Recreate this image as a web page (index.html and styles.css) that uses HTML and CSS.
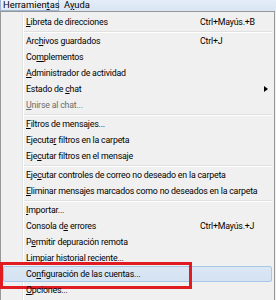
FILE: index.html
```html
<!DOCTYPE html>
<html>
<head>
<meta charset="utf-8">
<link rel="stylesheet" href="styles.css">
</head>
<body>
<div class="menubar">
  <div class="mb-item active">Herramien<u>t</u>as</div>
  <div class="mb-item">A<u>y</u>uda</div>
</div>
<div class="menu">
  <div class="item"><span class="label"><u>L</u>ibreta de direcciones</span><span class="key">Ctrl+Mayús.+B</span></div>
  <div class="sep"></div>
  <div class="item"><span class="label">Arc<u>h</u>ivos guardados</span><span class="key">Ctrl+J</span></div>
  <div class="item"><span class="label">Co<u>m</u>plementos</span></div>
  <div class="item"><span class="label"><u>A</u>dministrador de actividad</span></div>
  <div class="item"><span class="label">Estado de <u>c</u>hat</span><span class="arrow"></span></div>
  <div class="item disabled"><span class="label"><u>U</u>nirse al chat...</span></div>
  <div class="sep"></div>
  <div class="item"><span class="label"><u>F</u>iltros de mensajes...</span></div>
  <div class="item"><span class="label">Ejecuta<u>r</u> filtros en la carpeta</span></div>
  <div class="item"><span class="label">Eje<u>c</u>utar filtros en el mensaje</span></div>
  <div class="sep"></div>
  <div class="item"><span class="label">Eje<u>c</u>utar controles de correo no deseado en la carpeta</span></div>
  <div class="item"><span class="label"><u>E</u>liminar mensajes marcados como no deseados en la carpeta</span></div>
  <div class="sep"></div>
  <div class="item"><span class="label"><u>I</u>mportar...</span></div>
  <div class="item"><span class="label">Consola d<u>e</u> errores</span><span class="key">Ctrl+Mayús.+J</span></div>
  <div class="item"><span class="label">P<u>e</u>rmitir depuración remota</span></div>
  <div class="item"><span class="label">Limpiar <u>h</u>istorial reciente...</span></div>
  <div class="item hover"><span class="label">Co<u>n</u>figuración de las cuentas...</span><div class="callout"></div></div>
  <div class="item"><span class="label"><u>O</u>pciones...</span></div>
</div>
</body>
</html>
```
FILE: styles.css
```css
html, body {
  margin: 0;
  padding: 0;
  background: #f0f0f0;
  overflow: hidden;
}
body {
  width: 276px;
  height: 300px;
  font-family: Roboto, "Noto Sans", sans-serif;
  font-size: 8.8px;
  letter-spacing: -0.2px;
  color: #000;
}
u { text-decoration: underline; text-underline-offset: 1px; }
.menubar {
  height: 11px;
  display: flex;
  background: linear-gradient(#e4edf8, #d9e5f3);
  overflow: hidden;
  font-size: 9.4px;
  letter-spacing: 0;
}
.mb-item {
  height: 11px;
  line-height: 9px;
  padding: 0 3px 0 4px;
  box-sizing: border-box;
  white-space: nowrap;
}
.mb-item.active {
  border: 1px solid #9eb6d4;
  border-top: none;
  background: linear-gradient(#eef4fb, #dfe9f5);
  padding: 0 2px 0 2px;
  width: 59px;
  margin-right: 1px;
}
.menu {
  position: relative;
  border: 1px solid #979797;
  margin-right: 1px;
  padding: 2px;
  background: #f0f0f0;
  height: 292px;
}
.menu::before {
  content: "";
  position: absolute;
  left: 21px;
  top: 2px;
  bottom: 0;
  width: 1px;
  background: #e2e3e3;
  box-shadow: 1px 0 0 #fff;
}
.item {
  position: relative;
  height: 16px;
  line-height: 14px;
  display: flex;
  align-items: center;
  padding-left: 22px;
  white-space: nowrap;
  border: 1px solid transparent;
  box-sizing: border-box;
  border-radius: 2px;
}
.label { flex: none; }
.key {
  position: absolute;
  left: 196px;
}
.disabled { color: #6d6d6d; }
.arrow {
  position: absolute;
  left: 260px;
  top: 4px;
  width: 0; height: 0;
  border-top: 3.5px solid transparent;
  border-bottom: 3.5px solid transparent;
  border-left: 4px solid #000;
}
.sep {
  height: 3px;
  margin-left: 21px;
  background: linear-gradient(transparent 0 1px, #e0e0e0 1px 2px, #fff 2px 3px);
  position: relative;
  z-index: 1;
}
.item.hover {
  background: linear-gradient(#dce7f4, #d4e2f2);
  border-color: #a8c6e8;
}
.callout {
  position: absolute;
  left: -4px;
  top: -5px;
  width: 186px;
  height: 21px;
  border: 3px solid #e01b22;
}
```
